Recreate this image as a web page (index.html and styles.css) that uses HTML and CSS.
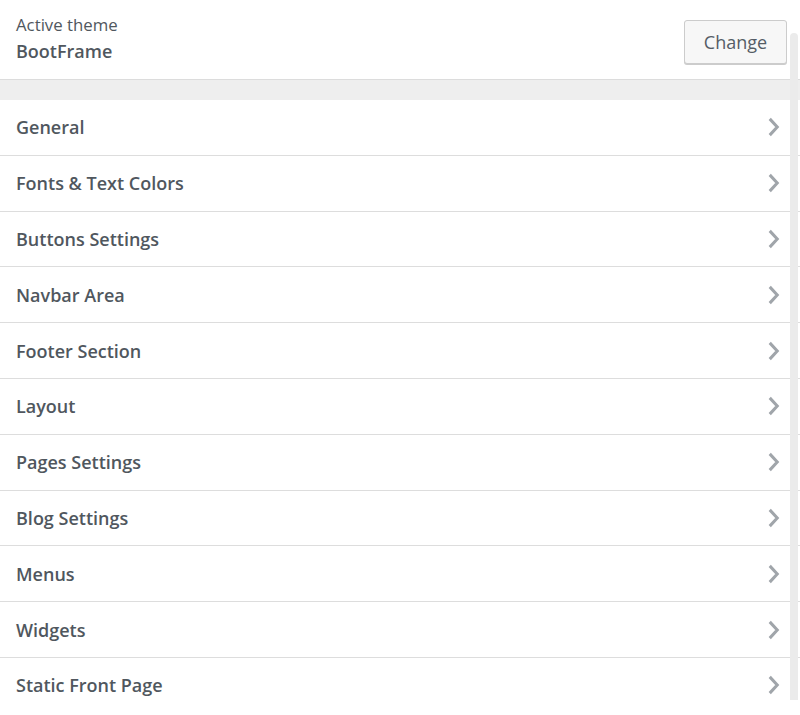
FILE: index.html
```html
<!DOCTYPE html>
<html>
<head>
<meta charset="utf-8">
<link rel="stylesheet" href="styles.css">
</head>
<body>
<div class="panel">
  <div class="theme-info">
    <div class="theme-text">
      <div class="label">Active theme</div>
      <div class="name">BootFrame</div>
    </div>
    <button class="change-btn">Change</button>
  </div>
  <div class="band"></div>
  <ul class="sections">
    <li class="section"><span>General</span><svg class="chev" viewBox="0 0 12 16"><path d="M3 1.5 L9 8 L3 14.5"/></svg></li>
    <li class="section"><span>Fonts &amp; Text Colors</span><svg class="chev" viewBox="0 0 12 16"><path d="M3 1.5 L9 8 L3 14.5"/></svg></li>
    <li class="section"><span>Buttons Settings</span><svg class="chev" viewBox="0 0 12 16"><path d="M3 1.5 L9 8 L3 14.5"/></svg></li>
    <li class="section"><span>Navbar Area</span><svg class="chev" viewBox="0 0 12 16"><path d="M3 1.5 L9 8 L3 14.5"/></svg></li>
    <li class="section"><span>Footer Section</span><svg class="chev" viewBox="0 0 12 16"><path d="M3 1.5 L9 8 L3 14.5"/></svg></li>
    <li class="section"><span>Layout</span><svg class="chev" viewBox="0 0 12 16"><path d="M3 1.5 L9 8 L3 14.5"/></svg></li>
    <li class="section"><span>Pages Settings</span><svg class="chev" viewBox="0 0 12 16"><path d="M3 1.5 L9 8 L3 14.5"/></svg></li>
    <li class="section"><span>Blog Settings</span><svg class="chev" viewBox="0 0 12 16"><path d="M3 1.5 L9 8 L3 14.5"/></svg></li>
    <li class="section"><span>Menus</span><svg class="chev" viewBox="0 0 12 16"><path d="M3 1.5 L9 8 L3 14.5"/></svg></li>
    <li class="section"><span>Widgets</span><svg class="chev" viewBox="0 0 12 16"><path d="M3 1.5 L9 8 L3 14.5"/></svg></li>
    <li class="section last"><span>Static Front Page</span><svg class="chev" viewBox="0 0 12 16"><path d="M3 1.5 L9 8 L3 14.5"/></svg></li>
  </ul>
  <div class="scrollbar"></div>
</div>
</body>
</html>
```
FILE: styles.css
```css
html, body {
  margin: 0;
  padding: 0;
  background: #fff;
}
body {
  font-family: "Open Sans", "Noto Sans", sans-serif;
  color: #50575e;
  overflow: hidden;
  height: 715px;
}
.panel {
  position: relative;
  width: 800px;
  height: 715px;
}
.theme-info {
  height: 80px;
  box-sizing: border-box;
  border-bottom: 1px solid #dcdcdc;
  display: flex;
  align-items: flex-start;
  justify-content: space-between;
  padding: 0 13px 0 16px;
}
.theme-text {
  padding-top: 13px;
}
.label {
  font-size: 16.8px;
  line-height: 24px;
  font-weight: 400;
}
.name {
  font-size: 18px;
  line-height: 29px;
  font-weight: 600;
}
.change-btn {
  margin-top: 20px;
  width: 103px;
  height: 44px;
  border: 1px solid #cccccc;
  border-radius: 3px;
  background: #f7f7f7;
  box-shadow: 0 1px 0 #cccccc;
  font-family: "Open Sans", "Noto Sans", sans-serif;
  font-size: 18px;
  color: #555d66;
  padding: 0;
}
.band {
  height: 20px;
  background: #eeeeee;
}
.sections {
  list-style: none;
  margin: 0;
  padding: 0;
}
.section {
  height: 54.8px;
  border-bottom: 1px solid #dddddd;
  display: flex;
  align-items: center;
  justify-content: space-between;
  padding: 0 19px 0 16px;
  font-size: 18px;
  font-weight: 600;
}
.section.last {
  border-bottom: none;
}
.chev {
  width: 15px;
  height: 20px;
  fill: none;
  stroke: #a0a5aa;
  stroke-width: 2.4;
}
.scrollbar {
  position: absolute;
  left: 790px;
  top: 33px;
  width: 8px;
  height: 667px;
  background: #ebebeb;
  border-radius: 4px 4px 0 0;
}
```
